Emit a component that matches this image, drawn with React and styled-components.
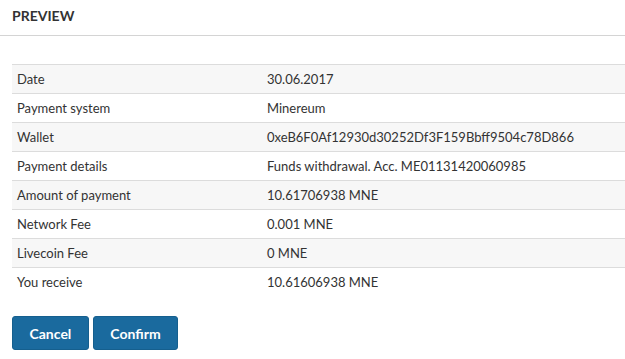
import React from 'react';
import styled, {createGlobalStyle} from 'styled-components';

const GlobalStyle = createGlobalStyle`
    body {
        margin: 0;
        background: #fff;
        font-family: Lato, "Open Sans", sans-serif;
        color: #333;
    }
`;

const Page = styled.div`
    width: 625px;
`;

const Header = styled.div`
    padding: 6px 12px 0;
    height: 29px;
    border-bottom: 1px solid #d4d4d4;
`;

const Title = styled.h4`
    margin: 0;
    font-size: 14px;
    font-weight: 700;
    line-height: 20px;
    color: #333;
`;

const Body = styled.div`
    padding: 28px 0 0 12px;
`;

const Table = styled.table`
    width: 100%;
    border-collapse: collapse;
    font-size: 13px;
    line-height: 18px;
`;

const Row = styled.tr`
    background: ${props => (props.striped ? '#f7f7f7' : '#fff')};
`;

const Cell = styled.td`
    padding: 5px 5px;
    border-top: 1px solid #dcdcdc;
    width: ${props => props.width || 'auto'};
    color: #333;
    white-space: nowrap;
`;

const Actions = styled.div`
    display: flex;
    gap: 4px;
    margin-top: 20px;
`;

const Button = styled.button`
    height: 34px;
    padding: 0 16.5px;
    border: 1px solid #155f8e;
    border-radius: 3px;
    background: #1a6a9e;
    color: #fff;
    font-family: Lato, sans-serif;
    font-size: 14px;
    font-weight: 700;
    cursor: pointer;
`;

const rows = [
    ['Date', '30.06.2017'],
    ['Payment system', 'Minereum'],
    ['Wallet', '0xeB6F0Af12930d30252Df3F159Bbff9504c78D866'],
    ['Payment details', 'Funds withdrawal. Acc. ME01131420060985'],
    ['Amount of payment', '10.61706938 MNE'],
    ['Network Fee', '0.001 MNE'],
    ['Livecoin Fee', '0 MNE'],
    ['You receive', '10.61606938 MNE'],
];

const App = () => {
    return (
        <Page>
            <GlobalStyle/>
            <Header>
                <Title>PREVIEW</Title>
            </Header>
            <Body>
                <Table>
                    <tbody>
                    {rows.map(([label, value], i) => (
                        <Row key={label} striped={i % 2 === 0}>
                            <Cell width="240px">{label}</Cell>
                            <Cell>{value}</Cell>
                        </Row>
                    ))}
                    </tbody>
                </Table>
                <Actions>
                    <Button>Cancel</Button>
                    <Button>Confirm</Button>
                </Actions>
            </Body>
        </Page>
    )
};

export default App;
